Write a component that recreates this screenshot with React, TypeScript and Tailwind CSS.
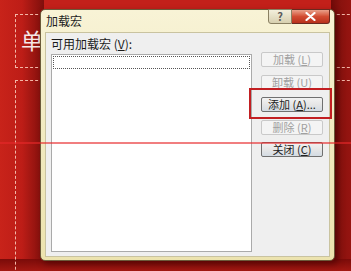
import React from 'react';

const font = { fontFamily: '"Noto Sans CJK SC", "Noto Sans", sans-serif' };

type BtnProps = { label: string; hotkey: string; suffix?: string; disabled?: boolean };

const DialogButton: React.FC<BtnProps> = ({ label, hotkey, suffix = '', disabled }) => (
  <div
    className={
      'h-[15px] w-[62px] flex items-center justify-center rounded-[2px] border text-[11px] leading-none whitespace-nowrap ' +
      (disabled
        ? 'border-[#c9c9c9] bg-[#f4f4f4] text-[#a0a0a0]'
        : 'border-[#707070] bg-gradient-to-b from-[#f2f2f2] via-[#e6e6e6] to-[#d3dbe3] text-[#222]')
    }
  >
    {label} (<span className="underline">{hotkey}</span>){suffix}
  </div>
);

export default function App() {
  return (
    <div style={font} className="relative w-[351px] h-[271px] overflow-hidden bg-[#c3201a]">
      {/* slide background shading */}
      <div className="absolute inset-y-0 left-0 w-[44px] bg-gradient-to-r from-[#c8231a] via-[#bd1d17] to-[#7e0f0c]" />
      <div className="absolute inset-y-0 right-0 w-[20px] bg-gradient-to-r from-[#6e0a08] via-[#8a120e] to-[#961410]" />
      <div className="absolute left-0 right-0 bottom-0 h-[12px] bg-gradient-to-b from-[#7a0b09] to-[#a31812]" />

      {/* placeholder boxes */}
      <div className="absolute left-[15px] top-[14px] w-[360px] h-[54px] border border-dashed border-[#f3b7a8]" />
      <div className="absolute left-[15px] top-[80px] w-[360px] h-[220px] border border-dashed border-[#f3b7a8]" />
      <div className="absolute left-[21px] top-[28px] text-[22px] leading-none text-white/90">单</div>

      {/* dialog window */}
      <div className="absolute left-[40px] top-[9px] w-[295px] h-[252px] rounded-[5px] border border-[#6b5a3a] bg-gradient-to-b from-[#f8f3d6] via-[#f1eac0] to-[#ece3ae] shadow-[3px_3px_6px_rgba(60,0,0,0.6)] flex flex-col">
        {/* title bar */}
        <div className="relative h-[22px] flex items-center pl-[5px] text-[12px] text-[#1d1d1d]">
          加载宏
          <div className="absolute right-[4px] top-[-1px] flex">
            <div className="w-[24px] h-[15px] border border-[#8a8062] rounded-bl-[3px] bg-gradient-to-b from-[#f3efdc] to-[#d8d0b0] flex items-center justify-center text-[11px] font-bold text-[#5a5a5a] leading-none">
              ?
            </div>
            <div className="w-[38px] h-[15px] border border-l-0 border-[#6a2a20] rounded-br-[3px] bg-gradient-to-b from-[#e8a08a] via-[#d24c32] to-[#b8301c] flex items-center justify-center">
              <svg width="11" height="9" viewBox="0 0 11 9">
                <path d="M1.5 1 L9.5 8 M9.5 1 L1.5 8" stroke="#fff" strokeWidth="2.2" strokeLinecap="round" />
              </svg>
            </div>
          </div>
        </div>

        {/* client area */}
        <div className="mx-[4px] mb-[3px] flex-1 border border-[#c9c3a0] bg-[#efefef] flex pl-[5px] pr-[6px] pt-[4px] pb-[4px]">
          <div className="flex flex-col w-[202px]">
            <div className="h-[14px] text-[12px] leading-[14px] text-[#1a1a1a]">
              可用加载宏 (<span className="underline">V</span>):
            </div>
            <div className="mt-[3px] flex-1 border border-[#aaaaaa] bg-white p-[1px]">
              <div className="h-[13px] border border-dotted border-[#555]" />
            </div>
          </div>
          <div className="ml-[9px] pt-[15px] flex flex-col gap-[7.5px]">
            <DialogButton label="加载" hotkey="L" disabled />
            <DialogButton label="卸载" hotkey="U" disabled />
            <DialogButton label="添加" hotkey="A" suffix="..." />
            <DialogButton label="删除" hotkey="R" disabled />
            <DialogButton label="关闭" hotkey="C" />
          </div>
        </div>
      </div>

      {/* annotation: highlight box and guide line */}
      <div className="absolute left-[249px] top-[88px] w-[83px] h-[31px] border-2 border-[#c21f22]" />
      <div className="absolute left-0 right-0 top-[142px] h-[2px] bg-[#e8282a]/60" />
    </div>
  );
}
